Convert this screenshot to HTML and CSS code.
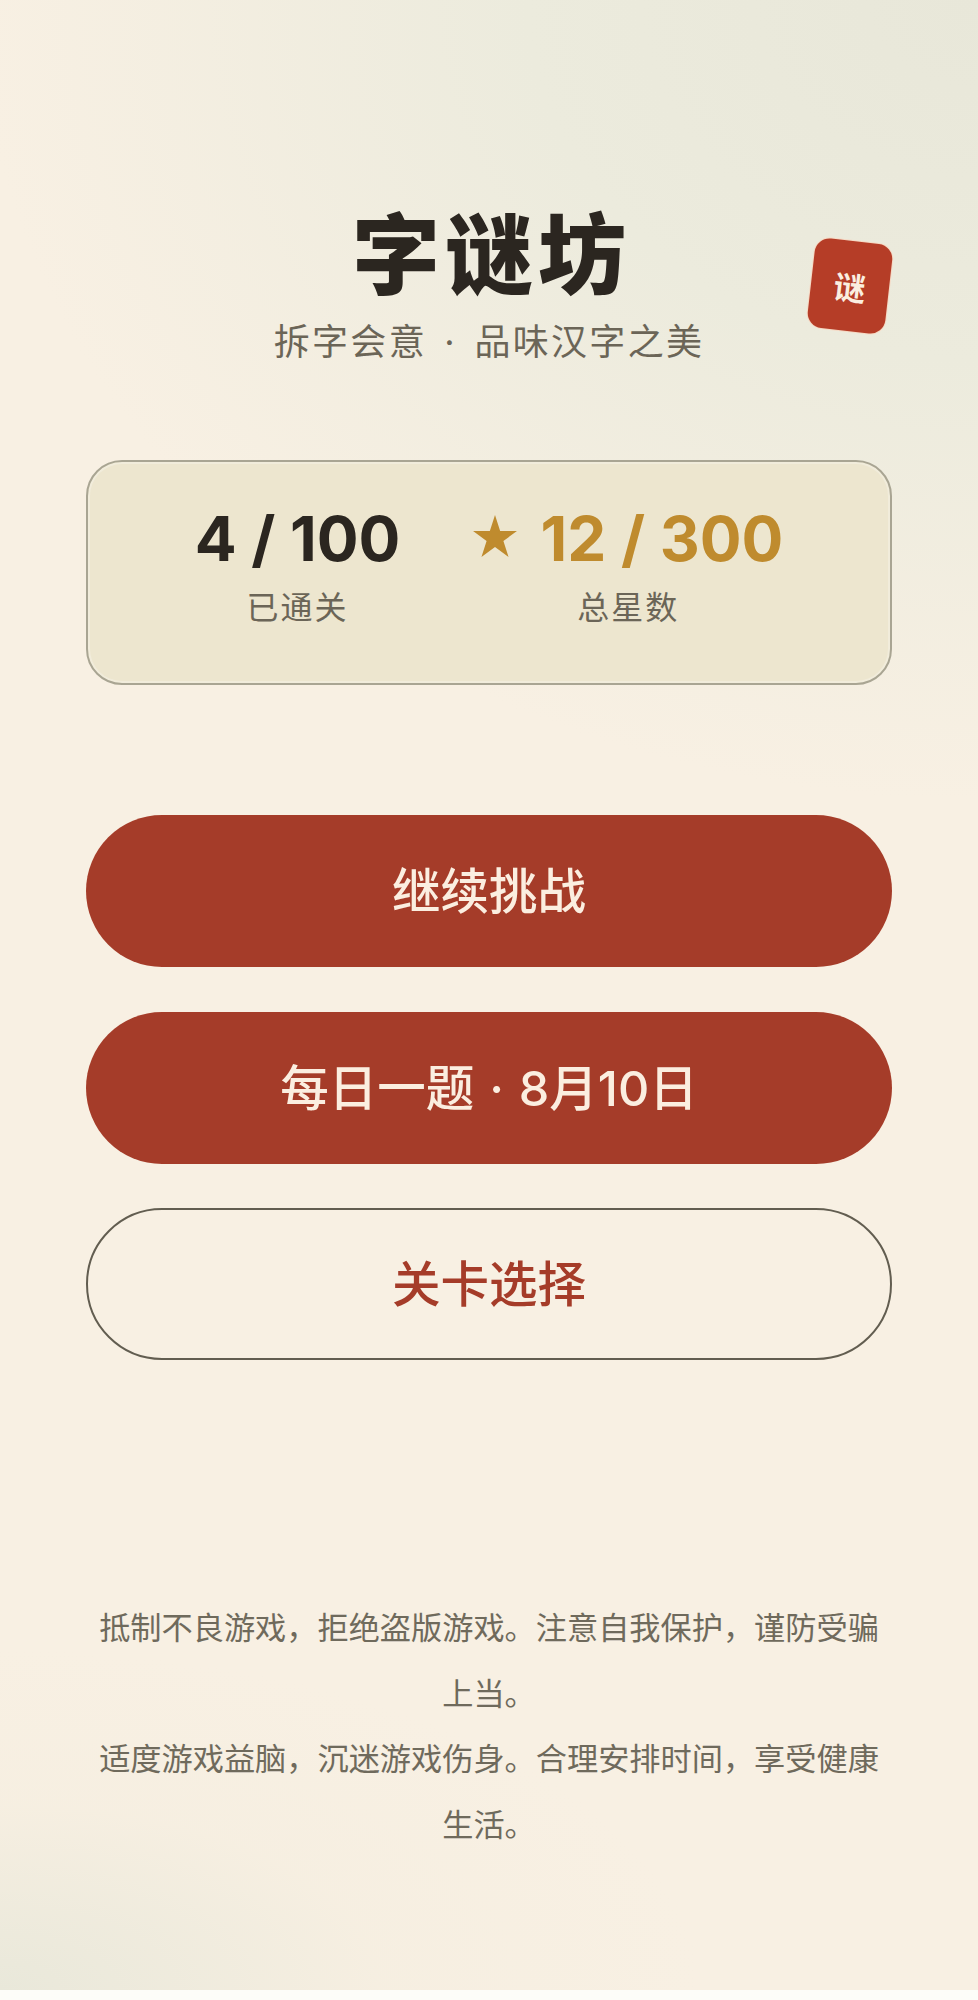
FILE: index.html
```html
<!DOCTYPE html>
<html lang="zh-CN">
<head>
<meta charset="utf-8">
<title>字谜坊</title>
<link rel="stylesheet" href="styles.css">
</head>
<body>
<main class="page">
  <header class="header">
    <h1 class="title">字谜坊</h1>
    <p class="subtitle">拆字会意 · 品味汉字之美</p>
    <div class="badge">谜</div>
  </header>
  <section class="stats">
    <div class="stat">
      <div class="stat-value">4 / 100</div>
      <div class="stat-label">已通关</div>
    </div>
    <div class="stat">
      <div class="stat-value gold">
        <svg class="star" viewBox="0 0 46 44" aria-hidden="true"><path d="M23 0L28.4 16.8H46L31.8 27.2L37.2 44L23 33.6L8.8 44L14.2 27.2L0 16.8H17.6Z"/></svg>
        <span>12 / 300</span>
      </div>
      <div class="stat-label">总星数</div>
    </div>
  </section>
  <nav class="actions">
    <button class="btn primary">继续挑战</button>
    <button class="btn primary">每日一题 · 8月10日</button>
    <button class="btn outline">关卡选择</button>
  </nav>
  <footer class="notice">
    <p>抵制不良游戏，拒绝盗版游戏。注意自我保护，谨防受骗上当。</p>
    <p>适度游戏益脑，沉迷游戏伤身。合理安排时间，享受健康生活。</p>
  </footer>
</main>
</body>
</html>
```

FILE: styles.css
```css
* { box-sizing: border-box; }
html, body { margin: 0; padding: 0; }
body {
  background: #fdfdf9;
  font-family: Inter, "Noto Sans CJK SC", sans-serif;
}
.page {
  width: 978px;
  height: 1990px;
  padding: 0 86px;
  display: flex;
  flex-direction: column;
  background:
    radial-gradient(ellipse 1000px 800px at 100% 0%, #e8e7d9 0%, #ecebdd 45%, rgba(248, 239, 226, 0) 100%),
    radial-gradient(ellipse 700px 340px at 0% 100%, #e9e8da 0%, rgba(245, 238, 224, 0.6) 55%, rgba(248, 239, 226, 0) 100%),
    #f8f0e3;
}
.header {
  position: relative;
  padding-top: 195px;
  text-align: center;
}
.title {
  margin: 0;
  font-size: 88px;
  font-weight: 900;
  line-height: 120px;
  letter-spacing: 5px;
  text-indent: 5px;
  color: #2b2620;
}
.subtitle {
  margin: 0;
  font-size: 36px;
  font-weight: 400;
  line-height: 54px;
  letter-spacing: 2.3px;
  word-spacing: 5px;
  color: #6b6557;
}
.badge {
  position: absolute;
  left: 725px;
  top: 241px;
  width: 78px;
  height: 90px;
  display: flex;
  align-items: center;
  justify-content: center;
  border-radius: 15px;
  background: #b53d27;
  box-shadow: 0 0 0 1px #f6d9c4;
  transform: rotate(6.5deg);
  color: #fbeee0;
  font-size: 32px;
  font-weight: 700;
}
.stats {
  margin-top: 91px;
  height: 225px;
  display: flex;
  justify-content: center;
  gap: 73px;
  padding-top: 41px;
  border: 2px solid #a9a593;
  border-radius: 36px;
  background: #ede6cf;
  box-shadow: inset 0 0 0 2px #f1ecdb;
}
.stat {
  display: flex;
  flex-direction: column;
  align-items: center;
}
.stat-value {
  display: flex;
  align-items: center;
  gap: 23px;
  font-size: 62px;
  font-weight: 700;
  line-height: 72px;
  color: #2b2620;
  white-space: pre;
}
.gold { color: #bf8b2e; }
.star {
  width: 44px;
  height: 42px;
  fill: #bf8b2e;
  margin-top: -6px;
}
.stat-label {
  margin-top: 10px;
  font-size: 32px;
  line-height: 46px;
  letter-spacing: 2px;
  color: #6b6557;
}
.actions {
  margin-top: 130px;
  display: flex;
  flex-direction: column;
  gap: 44.5px;
}
.btn {
  height: 152px;
  border-radius: 76px;
  font-family: inherit;
  font-size: 48.5px;
  font-weight: 500;
  word-spacing: 2px;
  padding: 0 0 6px;
}
.primary {
  border: 0;
  background: #a53c29;
  color: #fbeee0;
}
.outline {
  border: 2px solid #625d50;
  background: transparent;
  color: #a53c29;
}
.notice {
  margin-top: 236px;
  color: #6f6a5c;
  font-size: 31.2px;
  line-height: 65.6px;
  text-align: center;
}
.notice p { margin: 0; }
```
